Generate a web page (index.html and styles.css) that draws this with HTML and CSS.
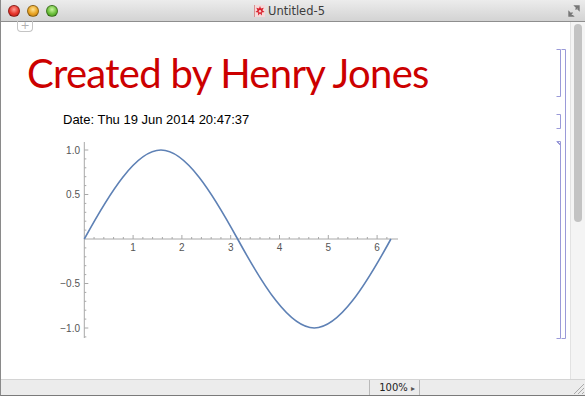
FILE: index.html
```html
<!DOCTYPE html>
<html lang="en">
<head>
    <meta charset="UTF-8">
    <title>Untitled-5</title>
    <link rel="stylesheet" href="styles.css">
</head>
<body>
    <div class="window">
        <div class="titlebar">
            <div class="lights">
                <span class="light red"></span>
                <span class="light yellow"></span>
                <span class="light green"></span>
            </div>
            <div class="doc-title">
                <svg class="doc-icon" width="11" height="12" viewBox="0 0 11 12">
                    <rect x="0" y="0" width="11" height="12" fill="#f5dada"/>
                    <rect x="0" y="0" width="1" height="12" fill="#d89090"/>
                    <path d="M6 1 L7 3.6 L9.8 2.8 L8.4 5.3 L10.6 7 L7.8 7.4 L8 10.4 L6 8.6 L4 10.4 L4.2 7.4 L1.4 7 L3.6 5.3 L2.2 2.8 L5 3.6 Z" fill="#d9202c"/>
                    <circle cx="6" cy="6.2" r="1.2" fill="#f7caca"/>
                </svg>
                <span>Untitled-5</span>
            </div>
            <svg class="fullscreen" width="12" height="12" viewBox="0 0 12 12">
                <path d="M7 1 H11 V5 Z M11 1 L7.5 4.5" fill="#777" stroke="#777" stroke-width="1.4"/>
                <path d="M1 7 V11 H5 Z M1 11 L4.5 7.5" fill="#777" stroke="#777" stroke-width="1.4"/>
            </svg>
        </div>
        <div class="main">
            <div class="notebook">
                <div class="cell-tab">+</div>
                <h1 class="title-cell">Created by Henry Jones</h1>
                <p class="text-cell">Date: Thu 19 Jun 2014 20:47:37</p>
                <div class="output-cell">
                    <svg class="plot" width="345" height="210" viewBox="0 0 345 210">
                        <g transform="translate(-55,-135)">
                            <g class="axis">
                                <line x1="84.3" y1="239" x2="398" y2="239"/>
                                <line x1="84.3" y1="142" x2="84.3" y2="338"/>
                            </g>
                            <g class="ticks" id="ticks"></g>
                            <g class="labels">
                                <text x="133.1" y="251" text-anchor="middle">1</text>
                                <text x="181.9" y="251" text-anchor="middle">2</text>
                                <text x="230.7" y="251" text-anchor="middle">3</text>
                                <text x="279.5" y="251" text-anchor="middle">4</text>
                                <text x="328.3" y="251" text-anchor="middle">5</text>
                                <text x="377.1" y="251" text-anchor="middle">6</text>
                                <text x="80" y="153.5" text-anchor="end">1.0</text>
                                <text x="80" y="198" text-anchor="end">0.5</text>
                                <text x="80" y="287" text-anchor="end">−0.5</text>
                                <text x="80" y="331.5" text-anchor="end">−1.0</text>
                            </g>
                            <path class="curve" d="M84.3 239 C109.3 193.4 135.95 150 160.95 150 C185.96 150 212.61 193.4 237.61 239 C262.61 284.6 289.26 328 314.26 328 C339.27 328 365.92 284.6 390.92 239"/>
                        </g>
                    </svg>
                </div>
                <svg class="brackets" width="14" height="295" viewBox="0 0 14 295">
                    <path d="M0.5 0.5 H4.5 V47.5 H0.5"/>
                    <path d="M0.5 65.5 H4.5 V79.5 H0.5"/>
                    <path d="M0.5 92.5 H4.5 V289.5 H0.5"/>
                    <path d="M1 93 L4 96 M2 93 L4 95" />
                    <path d="M5.5 0.5 H9.5 V289.5 H5.5"/>
                </svg>
            </div>
            <div class="scrollbar">
                <div class="thumb"></div>
            </div>
        </div>
        <div class="statusbar">
            <div class="zoom">100% <span class="arrow">▸</span></div>
            <svg class="grip" width="14" height="14" viewBox="0 0 14 14">
                <path d="M13 3 L3 13 M13 7 L7 13 M13 11 L11 13" stroke="#aaa" stroke-width="1"/>
            </svg>
        </div>
    </div>
    <script>
        // minor and major ticks of the plot axes
        const ticks = document.getElementById('ticks');
        let out = '';
        for (let i = 1; i <= 31; i++) {
            const x = 84.3 + 48.8 * i * 0.2;
            const len = i % 5 === 0 ? 4 : 2;
            out += `<line x1="${x}" y1="239" x2="${x}" y2="${239 - len}"/>`;
        }
        for (let i = -11; i <= 10; i++) {
            if (i === 0) continue;
            const y = 239 - 89 * i * 0.1;
            const len = i % 5 === 0 ? 4 : 2;
            out += `<line x1="84.3" y1="${y}" x2="${84.3 + len}" y2="${y}"/>`;
        }
        ticks.innerHTML = out;
    </script>
</body>
</html>
```

FILE: styles.css
```css
* { margin: 0; padding: 0; box-sizing: border-box; }
body { width: 585px; height: 396px; overflow: hidden; background: #ffffff; font-family: 'Liberation Sans', Arial, sans-serif; }
.window { width: 585px; height: 396px; display: flex; flex-direction: column; border-left: 1px solid #8a8a8a; border-bottom: 1px solid #7a7a7a; }
.titlebar { height: 22px; flex: none; display: flex; align-items: center; position: relative; background: linear-gradient(#ececec, #d3d3d3); border-bottom: 1px solid #8e8e8e; }
.lights { display: flex; gap: 7px; padding-left: 7px; }
.light { width: 12px; height: 12px; border-radius: 50%; border: 1px solid rgba(0, 0, 0, 0.35); }
.light.red { background: radial-gradient(circle at 50% 35%, #ff9d94 0, #e5342b 55%, #b91c16 100%); }
.light.yellow { background: radial-gradient(circle at 50% 35%, #ffe494 0, #e8a323 55%, #b87710 100%); }
.light.green { background: radial-gradient(circle at 50% 35%, #c9f5a0 0, #6bbf3a 55%, #3f8d1c 100%); }
.doc-title { position: absolute; left: 253px; top: 4px; display: flex; align-items: center; gap: 3px; font-family: 'DejaVu Sans', sans-serif; font-size: 11.5px; color: #3c3c3c; }
.doc-icon { display: block; }
.fullscreen { position: absolute; right: 5px; top: 5px; }
.main { flex: 1; display: flex; min-height: 0; }
.notebook { flex: 1; position: relative; }
.cell-tab { position: absolute; left: 16px; top: -1px; width: 16px; height: 11px; border: 1px solid #c4c4c4; border-top: none; border-radius: 0 0 4px 4px; font-family: 'DejaVu Sans', sans-serif; font-size: 11px; line-height: 9px; text-align: center; color: #b0b0b0; }
.title-cell { padding: 26px 0 0 26px; font-family: Lato, 'Open Sans', sans-serif; font-weight: 400; font-size: 40px; letter-spacing: -0.7px; line-height: 50px; color: #cc0000; }
.text-cell { padding: 14px 0 0 62px; font-size: 13px; line-height: 16px; color: #000000; }
.output-cell { padding: 7px 0 0 54px; }
.plot { display: block; }
.axis line, .ticks line { stroke: #a8a8a8; stroke-width: 1; }
.labels text { font-family: 'Liberation Sans', Arial, sans-serif; font-size: 10px; fill: #555555; }
.curve { fill: none; stroke: #5e81b5; stroke-width: 1.6; }
.brackets { position: absolute; right: 0; top: 27px; fill: none; stroke: #9a9ad8; stroke-width: 1; }
.scrollbar { width: 15px; flex: none; background: #f4f4f4; border-left: 1px solid #e2e2e2; padding: 2px 3px 0 3px; }
.thumb { width: 8px; height: 198px; border-radius: 4px; background: #c3c3c3; }
.statusbar { height: 16px; flex: none; display: flex; justify-content: flex-end; background: #ececec; border-top: 1px solid #d4d4d4; }
.zoom { width: 51px; margin-right: 151px; border-left: 1px solid #b9b9b9; border-right: 1px solid #b9b9b9; font-family: 'DejaVu Sans', sans-serif; font-size: 10px; line-height: 15px; text-align: right; padding-right: 4px; color: #222; }
.zoom .arrow { font-size: 8px; color: #555; }
.grip { margin-top: 1px; }
```
